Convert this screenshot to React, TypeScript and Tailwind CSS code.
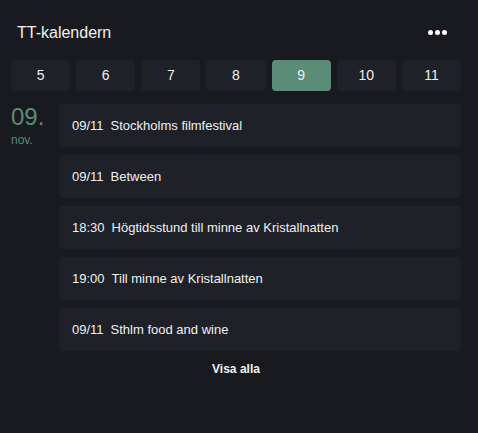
import React from "react";

const days = ["5", "6", "7", "8", "9", "10", "11"];
const events = [
  ["09/11", "Stockholms filmfestival"],
  ["09/11", "Between"],
  ["18:30", "Högtidsstund till minne av Kristallnatten"],
  ["19:00", "Till minne av Kristallnatten"],
  ["09/11", "Sthlm food and wine"],
];

export default function App() {
  return (
    <div
      className="w-[478px] h-[433px] bg-[#181a1f] text-[#f0f0f0] pl-[11px] pr-[17px] overflow-hidden"
      style={{ fontFamily: '"Liberation Sans", Arial, sans-serif' }}
    >
      <div className="flex items-center justify-between h-[60px] pl-[6px] pr-[14px] pt-[5px]">
        <span className="text-[16px]">TT-kalendern</span>
        <div className="flex gap-[2px]">
          <span className="w-[5px] h-[5px] rounded-full bg-white" />
          <span className="w-[5px] h-[5px] rounded-full bg-white" />
          <span className="w-[5px] h-[5px] rounded-full bg-white" />
        </div>
      </div>
      <div className="grid grid-cols-7 gap-[6px]">
        {days.map((d) => (
          <div
            key={d}
            className={`h-[31px] rounded-[4px] flex items-center justify-center text-[14px] ${
              d === "9" ? "bg-[#5b8c77]" : "bg-[#1f2128]"
            }`}
          >
            {d}
          </div>
        ))}
      </div>
      <div className="flex mt-[13px]">
        <div className="w-[48px] flex flex-col text-[#5b8c77]">
          <span className="text-[24px] leading-[24px] mt-[1px]">09.</span>
          <span className="text-[12px] leading-[14px] mt-[4px]">nov.</span>
        </div>
        <div className="flex-1 flex flex-col gap-[8px]">
          {events.map(([t, n], i) => (
            <div
              key={i}
              className="h-[43px] rounded-[4px] bg-[#1f2128] flex items-center pl-[13px] text-[13px] gap-[7px]"
            >
              <span>{t}</span>
              <span>{n}</span>
            </div>
          ))}
        </div>
      </div>
      <div className="text-center text-[12px] font-bold mt-[9px]">Visa alla</div>
    </div>
  );
}
